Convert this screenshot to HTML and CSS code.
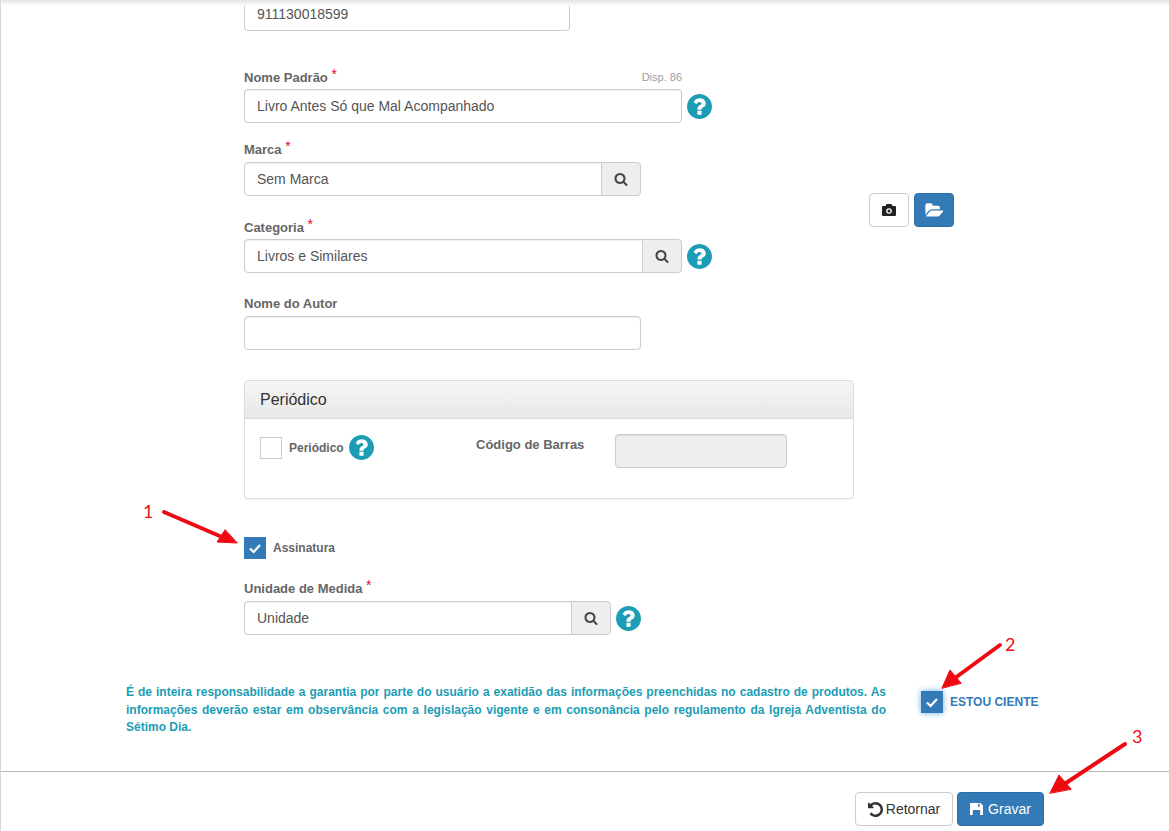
FILE: index.html
```html
<!DOCTYPE html>
<html lang="pt-BR">
<head>
<meta charset="utf-8">
<title>Cadastro de produto</title>
<link rel="stylesheet" href="styles.css">
</head>
<body>
<svg class="sprite" xmlns="http://www.w3.org/2000/svg">
  <symbol id="i-help" viewBox="128 128 1536 1536"><path d="M1024 1376v-192q0-14-9-23t-23-9h-192q-14 0-23 9t-9 23v192q0 14 9 23t23 9h192q14 0 23-9t9-23zm256-672q0-88-55.5-163t-138.5-116-170-41q-243 0-371 213-15 24 8 42l132 100q7 6 19 6 16 0 25-12 53-68 86-92 34-24 86-24 48 0 85.5 26t37.5 59q0 38-20 61t-68 45q-63 28-115.5 86.5t-52.5 125.5v36q0 14 9 23t23 9h192q14 0 23-9t9-23q0-19 21.5-49.5t54.5-49.5q32-18 49-28.5t46-35 44.5-48 28-60.5 12.5-81zm384 192q0 209-103 385.5t-279.5 279.5-385.5 103-385.5-103-279.5-279.5-103-385.5 103-385.5 279.5-279.5 385.5-103 385.5 103 279.5 279.5 103 385.5z"/></symbol>
  <symbol id="i-search" viewBox="0 0 1792 1792"><path d="M1216 832q0-185-131.5-316.5t-316.5-131.5-316.5 131.5-131.5 316.5 131.5 316.5 316.5 131.5 316.5-131.5 131.5-316.5zm512 832q0 52-38 90t-90 38q-54 0-90-38l-343-342q-179 124-399 124-143 0-273.5-55.5t-225-150-150-225-55.5-273.5 55.5-273.5 150-225 225-150 273.5-55.5 273.5 55.5 225 150 150 225 55.5 273.5q0 220-124 399l343 343q37 37 37 90z"/></symbol>
  <symbol id="i-folder" viewBox="0 0 1920 1792"><path d="M1879 952q0 31-31 66l-336 396q-43 51-120.5 86.5t-143.5 35.5h-1088q-34 0-60.5-13t-26.5-43q0-31 31-66l336-396q43-51 120.5-86.5t143.5-35.5h1088q34 0 60.5 13t26.5 43zm-343-344v160h-832q-94 0-197 47.5t-164 119.5l-337 396-5 6q0-4-.5-12.5t-.5-12.5v-960q0-92 66-158t158-66h320q92 0 158 66t66 158v32h544q92 0 158 66t66 158z"/></symbol>
  <symbol id="i-camera" viewBox="0 0 14 12"><path fill-rule="evenodd" d="M1 2h2.5l1-2h5l1 2H13a1 1 0 0 1 1 1v8a1 1 0 0 1-1 1H1a1 1 0 0 1-1-1V3a1 1 0 0 1 1-1zm6 2.2a2.8 2.8 0 1 0 0 5.6 2.8 2.8 0 0 0 0-5.6zm0 1.3a1.5 1.5 0 1 1 0 3 1.5 1.5 0 0 1 0-3z"/></symbol>
  <symbol id="i-undo" viewBox="128 128 1536 1536"><path d="M1664 896q0 156-61 298t-164 245-245 164-298 61q-172 0-327-72.5t-264-204.5q-7-10-6.5-22.5t8.5-20.5l137-138q10-9 25-9 16 2 23 12 73 95 179 147t225 52q104 0 198.5-40.5t163.5-109.5 109.5-163.5 40.5-198.5-40.5-198.5-109.5-163.5-163.5-109.5-198.5-40.5q-98 0-188 35.5t-160 101.5l137 138q31 30 14 69-17 40-59 40h-448q-26 0-45-19t-19-45v-448q0-42 40-59 39-17 69 14l130 129q107-101 244.5-156.5t284.5-55.5q156 0 298 61t245 164 164 245 61 298z"/></symbol>
  <symbol id="i-save" viewBox="0 0 13 12"><path fill-rule="evenodd" d="M.6 0H10.5L13 2.5v8.9a.6.6 0 0 1-.6.6H10.2V7H2.8v5H.6a.6.6 0 0 1-.6-.6V.6A.6.6 0 0 1 .6 0zm7.4.8v3h1.6v-3z"/></symbol>
  <symbol id="i-check" viewBox="0 0 22 22"><path d="M6 11.5l3.6 3.5L16 8" fill="none" stroke="#fff" stroke-width="2.2"/></symbol>
</svg>

<div class="page">
  <div class="top-shadow"></div>

  <div class="content">
    <main class="form-col">
      <div class="input-row first-row">
        <input class="input w-326" type="text" value="911130018599">
      </div>

      <div class="field gap-nome">
        <div class="label-row w-438">
          <label class="label">Nome Padrão <span class="req">*</span></label>
          <span class="counter">Disp. 86</span>
        </div>
        <div class="input-row">
          <input class="input w-438" type="text" value="Livro Antes Só que Mal Acompanhado">
          <svg class="help"><use href="#i-help"/></svg>
        </div>
      </div>

      <div class="field gap-marca">
        <label class="label label-far">Marca <span class="req">*</span></label>
        <div class="input-row">
          <div class="group w-397">
            <input class="input in-group" type="text" value="Sem Marca">
            <span class="addon"><svg class="ico-search"><use href="#i-search"/></svg></span>
          </div>
        </div>
      </div>

      <div class="field gap-cat">
        <label class="label">Categoria <span class="req">*</span></label>
        <div class="input-row">
          <div class="group w-438">
            <input class="input in-group" type="text" value="Livros e Similares">
            <span class="addon"><svg class="ico-search"><use href="#i-search"/></svg></span>
          </div>
          <svg class="help"><use href="#i-help"/></svg>
        </div>
      </div>

      <div class="field gap-autor">
        <label class="label">Nome do Autor</label>
        <div class="input-row">
          <input class="input w-397" type="text">
        </div>
      </div>

      <section class="panel">
        <h3 class="panel-head">Periódico</h3>
        <div class="panel-body">
          <div class="check-line per-check">
            <span class="check"></span>
            <span class="check-label">Periódico</span>
            <svg class="help help-sm"><use href="#i-help"/></svg>
          </div>
          <span class="label barcode-label">Código de Barras</span>
          <input class="input barcode" type="text" disabled>
        </div>
      </section>

      <div class="check-line assinatura">
        <span class="check on"><svg class="ico-check"><use href="#i-check"/></svg></span>
        <span class="check-label">Assinatura</span>
      </div>

      <div class="field gap-unid">
        <label class="label label-far">Unidade de Medida <span class="req">*</span></label>
        <div class="input-row">
          <div class="group w-367">
            <input class="input in-group" type="text" value="Unidade">
            <span class="addon"><svg class="ico-search"><use href="#i-search"/></svg></span>
          </div>
          <svg class="help"><use href="#i-help"/></svg>
        </div>
      </div>
    </main>

    <aside class="side-actions">
      <button class="btn btn-icon"><svg class="ico-camera"><use href="#i-camera"/></svg></button>
      <button class="btn btn-icon btn-primary"><svg class="ico-folder"><use href="#i-folder"/></svg></button>
    </aside>
  </div>

  <div class="notice-row">
    <p class="notice">É de inteira responsabilidade a garantia por parte do usuário a exatidão das informações preenchidas no cadastro de produtos. As informações deverão estar em observância com a legislação vigente e em consonância pelo regulamento da Igreja Adventista do Sétimo Dia.</p>
    <div class="aware">
      <span class="check on glow"><svg class="ico-check"><use href="#i-check"/></svg></span>
      <span class="aware-label">ESTOU CIENTE</span>
    </div>
  </div>

  <footer class="footer">
    <button class="btn btn-back"><svg class="ico-undo"><use href="#i-undo"/></svg>Retornar</button>
    <button class="btn btn-primary btn-save"><svg class="ico-save"><use href="#i-save"/></svg>Gravar</button>
  </footer>

  <svg class="arrows" viewBox="0 0 1169 831" xmlns="http://www.w3.org/2000/svg">
    <g fill="#ee0a12" stroke="#ee0a12" stroke-linecap="round" stroke-linejoin="round">
      <path d="M164 512L222 537" stroke-width="4" fill="none"/>
      <path d="M237 543L217 542L225 530Z" stroke-width="1"/>
      <path d="M1000 645L955 678" stroke-width="4" fill="none"/>
      <path d="M942 688L950 670L961 683Z" stroke-width="1"/>
      <path d="M1125 744L1066 783" stroke-width="4" fill="none"/>
      <path d="M1050 793L1059 775L1071 789Z" stroke-width="1"/>
    </g>
  </svg>
  <span class="mark mark-1">1</span>
  <span class="mark mark-2">2</span>
  <span class="mark mark-3">3</span>
</div>
</body>
</html>
```
FILE: styles.css
```css
* { box-sizing: border-box; }
html, body { margin: 0; padding: 0; background: #fff; }
body { font-family: "Liberation Sans", Arial, sans-serif; font-size: 14px; color: #555; }
.sprite { position: absolute; width: 0; height: 0; }

.page {
  position: relative;
  width: 1169px;
  height: 831px;
  overflow: hidden;
  border-left: 1px solid #d8d8d8;
}
.top-shadow {
  position: absolute;
  top: 0; left: 0; right: 0;
  height: 6px;
  background: linear-gradient(#e4e4e4, #fff);
  z-index: 2;
}

.content { display: flex; align-items: flex-start; padding-left: 243px; }
.form-col { width: 610px; }
.first-row { margin-top: -3px; }

.field { display: block; }
.gap-nome { margin-top: 37px; }
.gap-marca { margin-top: 17px; }
.gap-cat { margin-top: 22px; }
.gap-autor { margin-top: 22px; }
.gap-unid { margin-top: 20px; }

.label-row { display: flex; justify-content: space-between; align-items: center; }
.label {
  display: block;
  height: 18px;
  margin-bottom: 3px;
  font-size: 13px;
  font-weight: 700;
  line-height: 18px;
  color: #666;
}
.label-far { margin-bottom: 4px; }
.req { position: relative; top: -3px; color: #e00b2a; font-size: 14px; font-weight: 400; }
.counter { font-size: 11px; color: #95a0a8; line-height: 18px; margin-bottom: 3px; }

.input-row { display: flex; align-items: center; gap: 5px; }
.input {
  display: block;
  height: 34px;
  padding: 6px 12px;
  font-family: inherit;
  font-size: 14px;
  color: #555;
  background: #fff;
  border: 1px solid #ccc;
  border-radius: 4px;
  box-shadow: inset 0 1px 1px rgba(0,0,0,.075);
  outline: none;
}
.w-326 { width: 326px; }
.w-438 { width: 438px; }
.w-397 { width: 397px; }
.w-367 { width: 367px; }

.group { display: flex; }
.in-group { flex: 1; min-width: 0; border-radius: 4px 0 0 4px; }
.addon {
  display: flex;
  align-items: center;
  justify-content: center;
  width: 40px;
  height: 34px;
  margin-left: -1px;
  background: #eee;
  border: 1px solid #ccc;
  border-radius: 0 4px 4px 0;
  flex: none;
}
.ico-search { width: 14px; height: 14px; fill: #444; }

.help { width: 25px; height: 25px; fill: #1c9db5; flex: none; }

.panel {
  margin-top: 30px;
  height: 119px;
  background: #fff;
  border: 1px solid #ddd;
  border-radius: 4px;
  box-shadow: 0 1px 1px rgba(0,0,0,.05);
}
.panel-head {
  margin: 0;
  height: 38px;
  padding: 0 15px;
  font-size: 16px;
  font-weight: 400;
  line-height: 37px;
  color: #333;
  background: linear-gradient(#f5f5f5, #e8e8e8);
  border-bottom: 1px solid #ddd;
  border-radius: 3px 3px 0 0;
}
.panel-body { display: flex; align-items: flex-start; padding: 15px 15px 0; }

.check-line { display: flex; align-items: center; }
.check {
  display: block;
  flex: none;
  width: 22px;
  height: 22px;
  background: #fff;
  border: 1px solid #ccc;
}
.check.on { background: #337ab7; border: 0; }
.check.glow { box-shadow: 0 0 6px #66afe9; }
.ico-check { display: block; width: 22px; height: 22px; }
.check-label { margin-left: 7px; font-size: 12px; font-weight: 700; color: #666; }

.per-check { width: 216px; margin-top: 1px; }
.help-sm { margin-left: 5px; }
.barcode-label { width: 139px; margin: 2px 0 0; }
.barcode { width: 172px; background: #eee; }

.assinatura { margin-top: 38px; }

.side-actions { display: flex; gap: 5px; margin: 193px 0 0 15px; }
.btn {
  display: inline-flex;
  align-items: center;
  justify-content: center;
  height: 34px;
  padding: 0;
  font-family: inherit;
  font-size: 14px;
  color: #333;
  background: #fff;
  border: 1px solid #ccc;
  border-radius: 4px;
}
.btn-icon { width: 40px; }
.btn-primary { color: #fff; background: #337ab7; border-color: #2e6da4; }
.ico-camera { width: 14px; height: 12px; fill: #222; }
.ico-folder { width: 19px; height: 17px; fill: #fff; }

.notice-row { display: flex; align-items: flex-start; margin-top: 49px; padding-left: 125px; }
.notice {
  width: 760px;
  height: 52px;
  margin: 0;
  font-size: 12px;
  font-weight: 700;
  line-height: 17.5px;
  color: #1c9db5;
  text-align: justify;
}
.aware { display: flex; align-items: center; margin: 7px 0 0 35px; }
.aware-label { margin-left: 7px; font-size: 12px; font-weight: 700; color: #337ab7; }

.footer {
  display: flex;
  justify-content: flex-end;
  gap: 4px;
  margin-top: 35px;
  padding: 20px 125px 0 0;
  border-top: 1px solid #b9b9b9;
}
.btn-back { width: 98px; }
.btn-save { width: 87px; }
.ico-undo { width: 15px; height: 15px; margin-right: 3px; fill: #333; }
.ico-save { width: 13px; height: 12px; margin-right: 5px; fill: #fff; }

.arrows { position: absolute; top: 0; left: -1px; width: 1169px; height: 831px; pointer-events: none; }
.mark { position: absolute; font-family: Lato, sans-serif; font-size: 18px; line-height: 20px; color: #e8101c; }
.mark-1 { left: 142px; top: 501px; }
.mark-2 { left: 1004px; top: 634px; }
.mark-3 { left: 1131px; top: 726px; }
```
